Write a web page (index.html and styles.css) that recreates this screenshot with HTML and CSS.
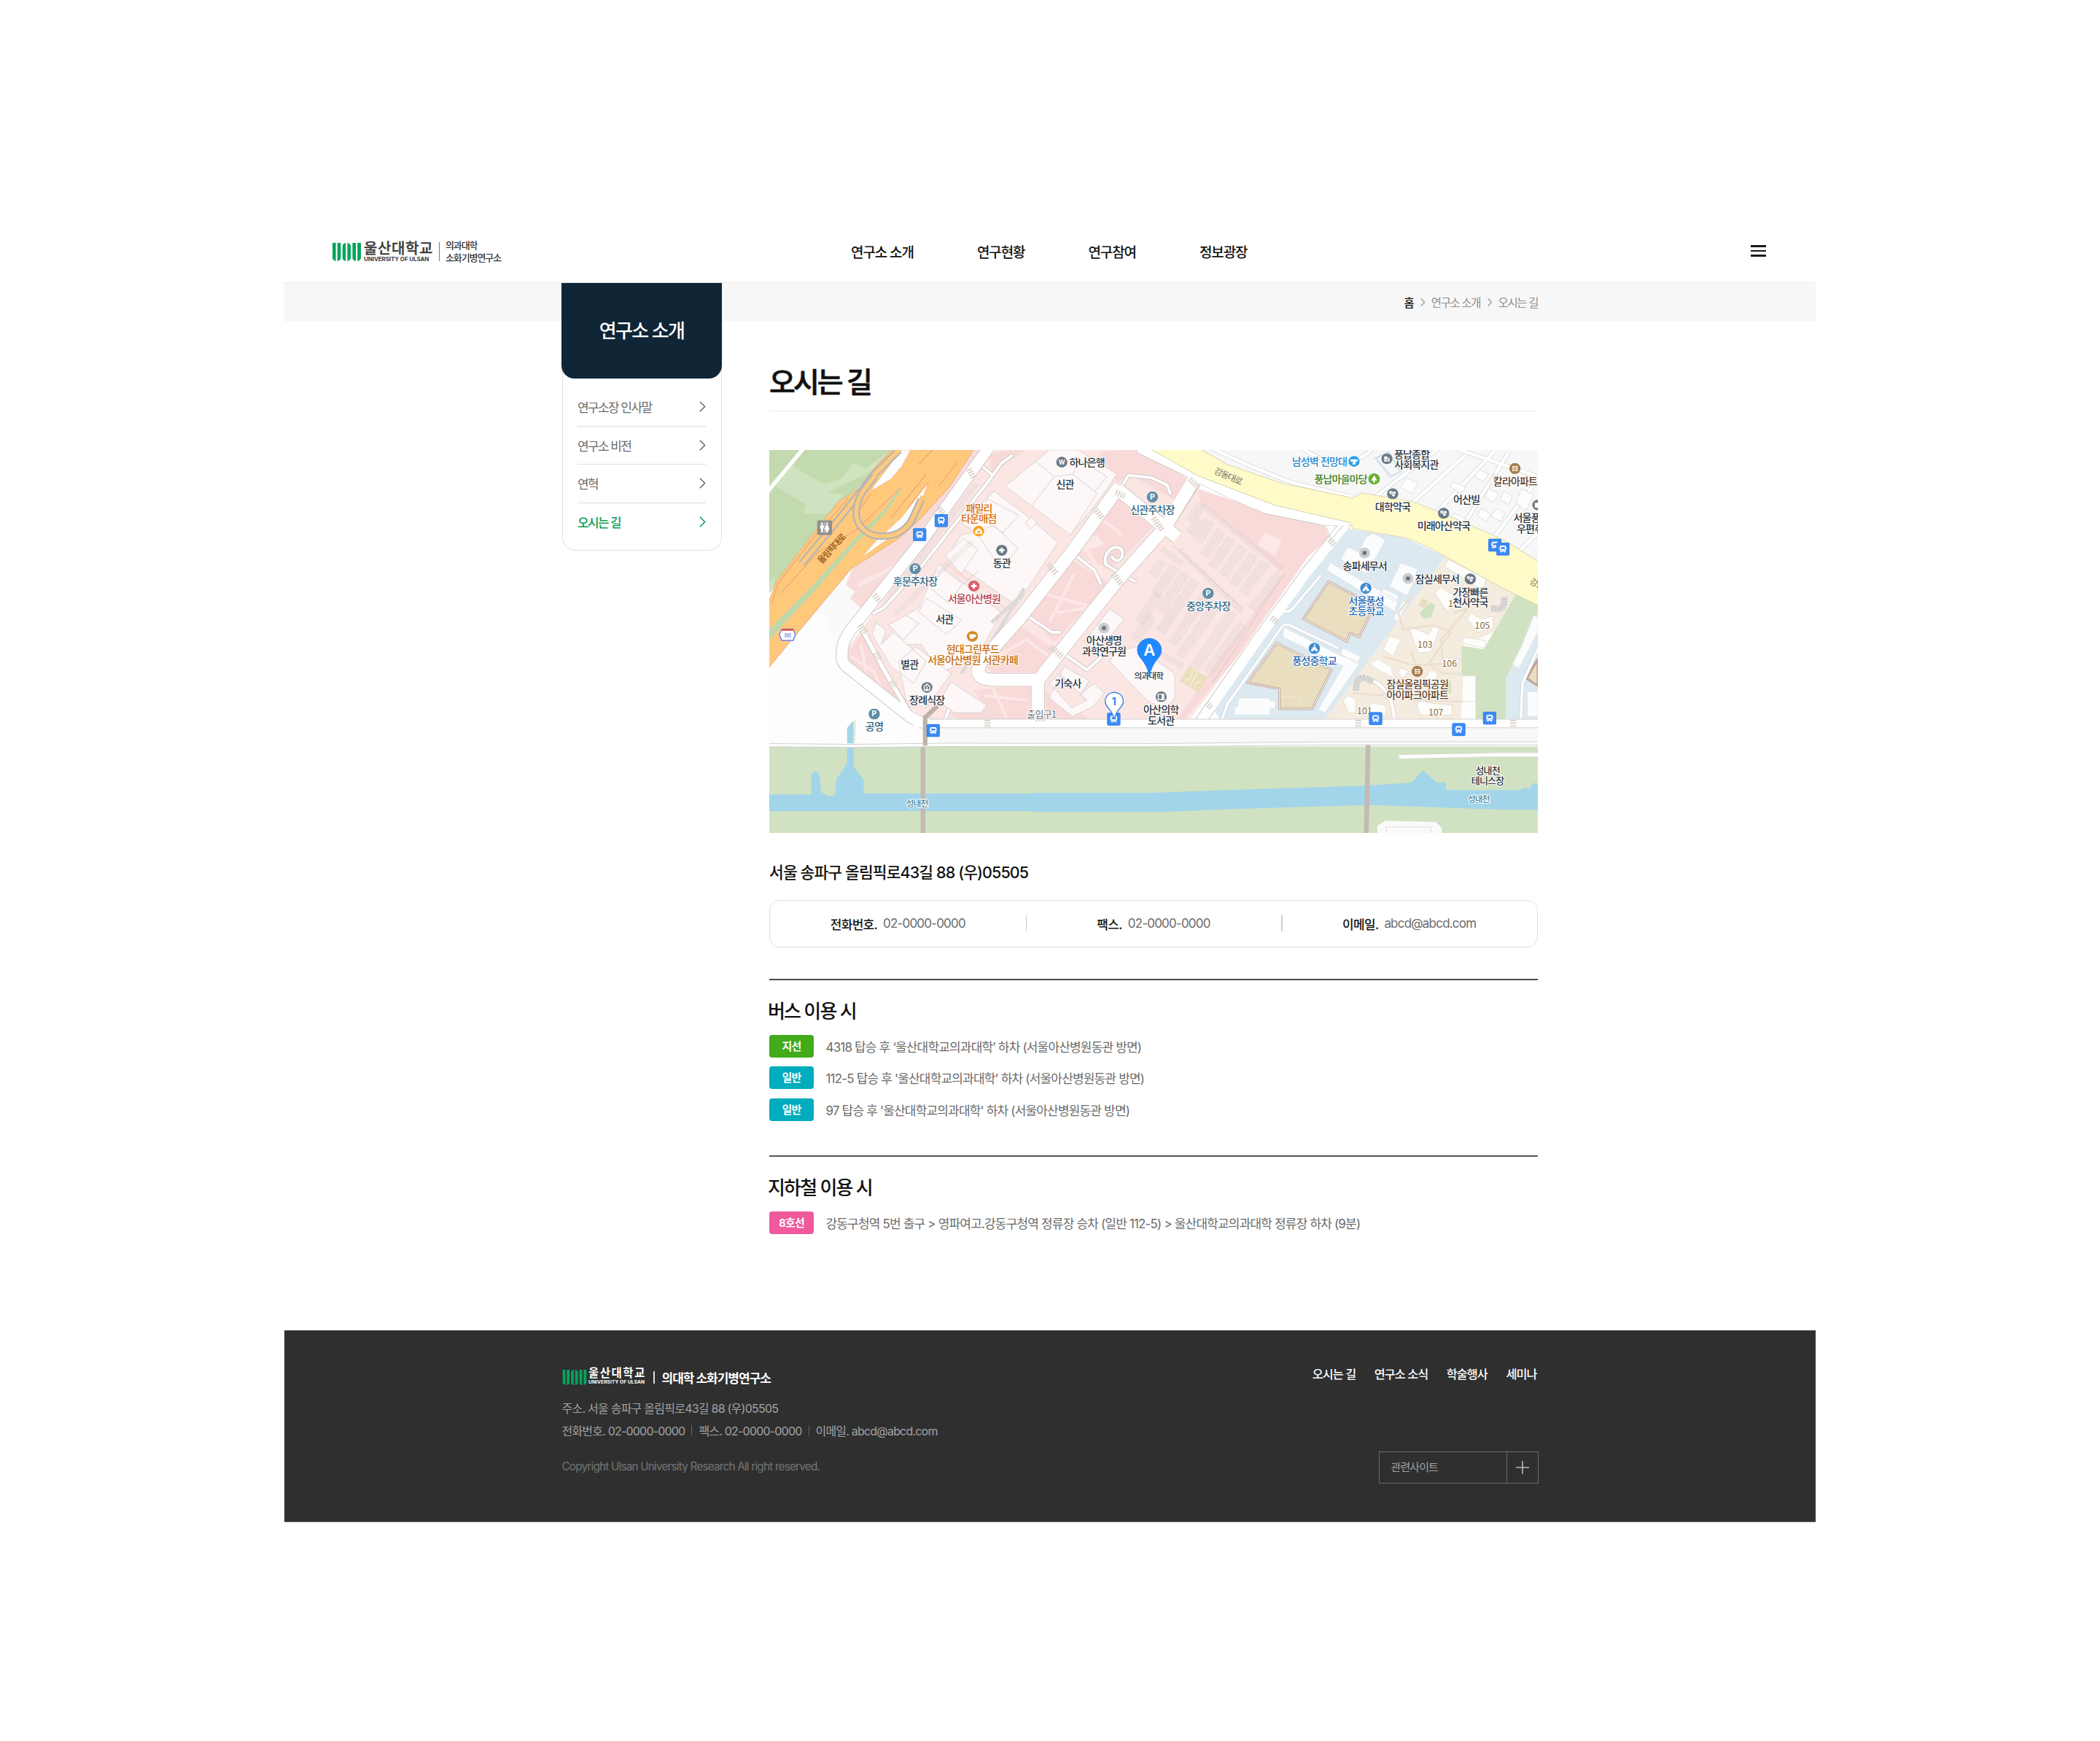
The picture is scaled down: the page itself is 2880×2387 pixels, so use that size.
FILE: index.html
```html
<!DOCTYPE html>
<html lang="ko">
<head>
<meta charset="utf-8">
<title>오시는 길</title>
<link rel="stylesheet" href="styles.css">
</head>
<body>
<svg class="defs" width="0" height="0">
  <defs>
    <symbol id="mark" viewBox="0 0 39 25">
      <path fill="#06a35c" d="M0 0H4.6V25C1.600 24 0 22.500 0 20.500ZM6.700 0H11.400V20.500C11.400 22.800 9.800 24.300 6.700 25ZM18.200 0V25C15 24.300 13.700 22.800 13.700 20.500V4.500C13.700 2.200 15 .7 18.200 0ZM20.400 0C23.600 .7 25 2.200 25 4.500V20.500C25 22.800 23.600 24.300 20.400 25ZM27.400 0H32V25C28.900 24.300 27.400 22.800 27.400 20.500ZM34.200 0H39V20.500C39 22.800 37.500 24.300 34.200 25Z"/>
    </symbol>
    <symbol id="chev" viewBox="0 0 8 14"><path d="M.8 .6L7.200 7L.8 13.400" fill="none" stroke="currentColor" stroke-width="1.500"/></symbol>
  </defs>
</svg>
<div class="page">
  <header class="header">
    <a class="logo">
      <svg class="logo-mark"><use href="#mark"/></svg>
      <span class="logo-name"><b>울산대학교</b><i>UNIVERSITY OF ULSAN</i></span>
      <span class="logo-bar"></span>
      <span class="logo-sub"><span>의과대학</span><span>소화기병연구소</span></span>
    </a>
    <nav class="gnb"><a>연구소 소개</a><a>연구현황</a><a>연구참여</a><a>정보광장</a></nav>
    <button class="burger"><span></span><span></span><span></span></button>
  </header>

  <div class="body">
    <aside class="side">
      <h2>연구소 소개</h2>
      <ul>
        <li><span>연구소장 인사말</span><svg><use href="#chev"/></svg></li>
        <li><span>연구소 비전</span><svg><use href="#chev"/></svg></li>
        <li><span>연혁</span><svg><use href="#chev"/></svg></li>
        <li class="on"><span>오시는 길</span><svg><use href="#chev"/></svg></li>
      </ul>
    </aside>
    <main class="content">
      <div class="crumbs"><b>홈</b><svg><use href="#chev"/></svg><span>연구소 소개</span><svg><use href="#chev"/></svg><span>오시는 길</span></div>
      <h1>오시는 길</h1>

      <svg class="map" viewBox="15 51 3061 1574" preserveAspectRatio="none">
        <defs>
          <symbol id="bus" viewBox="0 0 54 54"><rect x="1" y="1" width="52" height="52" rx="6" fill="#3b8af5" stroke="#2f74d8" stroke-width="2"/><path fill="#fff" d="M15 17Q15 13 19 13H35Q39 13 39 17V37H36V41H31V37H23V41H18V37H15ZM13 20H15V27H13ZM39 20H41V27H39Z"/><path fill="#3b8af5" d="M19 19H35V27H19ZM18 31H22V34H18ZM32 31H36V34H32Z"/></symbol>
          <symbol id="park" viewBox="0 0 46 46"><circle cx="23" cy="23" r="22.500" fill="#5f8ea6"/><text x="23" y="33" class="glyph">P</text></symbol>
          <symbol id="pill" viewBox="0 0 46 46"><circle cx="23" cy="23" r="22.500" fill="#6b7a85"/><circle cx="16" cy="18" r="7" fill="#fff"/><rect x="22" y="13" width="12" height="21" rx="6" fill="#fff" transform="rotate(20 28 23)"/><path d="M12 22L20 14M22 22L35 26" stroke="#6b7a85" stroke-width="2.500"/></symbol>
          <symbol id="plus" viewBox="0 0 46 46"><circle cx="23" cy="23" r="22.500" fill="currentColor"/><path d="M23 12V34M12 23H34" stroke="#fff" stroke-width="8"/></symbol>
          <symbol id="dot" viewBox="0 0 46 46"><circle cx="23" cy="23" r="22" fill="#c9cdd1"/><rect x="15.500" y="15.500" width="15" height="15" fill="#6b7076"/></symbol>
          <symbol id="school" viewBox="0 0 46 46"><circle cx="23" cy="23" r="22.500" fill="#3f8ccf"/><path fill="#fff" d="M22 8H29V12H24V15L31 21V25L36 28V35H26V29H20V35H10V28L15 25V21L22 15Z"/></symbol>
          <symbol id="apt" viewBox="0 0 46 46"><circle cx="23" cy="23" r="22.500" fill="#a47c45"/><path fill="#fff" d="M12 13H34V33H12Z"/><path d="M23 13V33M12 20H34M12 27H34" stroke="#a47c45" stroke-width="2.500"/></symbol>
        </defs>

        <rect x="15" y="51" width="3061" height="1574" fill="#fdfdfd"/>

        <!-- park beside the expressway -->
        <path fill="#c2daae" d="M15 51H540L330 240L180 440L15 640Z"/>
        <path fill="#d0e2c0" d="M40 200L105 115L230 190L300 170L350 105L400 125L490 55L500 90L400 150L250 225L310 235L250 310L150 315L160 275ZM15 600L40 560L30 620L15 640Z"/>
        <path d="M8 222L155 40" stroke="#fff" stroke-width="16"/>
        <path fill="#fafafa" d="M340 540L400 700L300 870L290 930L230 700L97 840Z"/>

        <!-- hospital strip along the expressway -->
        <path fill="#f8dcda" d="M830 51H865L620 400L388 708L336 660L356 635L320 605L345 540L500 430L640 290Z"/>
        <path d="M370 605L540 520L600 440" fill="none" stroke="#fbe7e5" stroke-width="18"/>

        <!-- expressway -->
        <path fill="#ffc97c" stroke="#f0b080" stroke-width="3" d="M500 51H828L735 200L620 330L530 415L340 540L97 840L10 950V680L45 590L190 395L290 265L330 240L380 200L430 130Z"/>
        <path fill="#fcfcfc" stroke="#f0b080" stroke-width="2" d="M532 51H578L545 115L500 170L440 208L420 215L490 120ZM650 180L615 280L570 350L490 415L380 495L440 425L540 330Z"/>
        <path fill="#bfd8aa" d="M15 788L190 605L360 412L470 300L535 205L540 215L470 320L365 430L200 625L15 832Z"/>
        <path d="M25 680L50 600L200 400L330 250M60 640L210 470L360 380L540 205M380 290L420 230M610 110L665 51M560 300L650 180M690 200L765 100M500 330L640 150" fill="none" stroke="#efa77c" stroke-width="4"/>
        <path d="M145 518L300 325L430 155L532 51" fill="none" stroke="#b5b5b5" stroke-width="30"/>
        <path d="M140 524L300 325L430 155L538 45" fill="none" stroke="#ffc97c" stroke-width="17"/>
        <path d="M435 158L385 225Q350 290 367 345Q400 410 470 405Q540 405 580 345L620 255" fill="none" stroke="#b5b5b5" stroke-width="30"/>
        <path d="M439 152L385 225Q350 290 367 345Q400 410 470 405Q540 405 580 345L626 240" fill="none" stroke="#ffc97c" stroke-width="16"/>

        <!-- hospital grounds -->
        <path fill="#fbe6e4" d="M890 51H1480L1620 150L1750 230L2000 315L2225 362L2245 410L2160 490L1879 900L1690 1157H640L325 930V870L430 720L700 340Z"/>
        <path fill="#f8dad8" d="M1400 51H1480L1620 130L1710 185L1660 270L1600 240L1450 150L1400 190L1330 60ZM1724 210L1780 230L2020 312L2229 365L2244 410L2160 490L1879 900L1669 1157H1640L1800 920L2065 555L1935 440L1730 268ZM890 70L970 51H1040L900 150ZM1410 250L1540 370L1375 545L1230 475ZM1200 490L1370 600L1150 840L1045 730ZM1005 770L1150 870L1080 965H900L870 920ZM330 880L380 810L560 1110L480 1060L320 930ZM830 1040L1060 1010L1050 1157H760L730 1130L880 1110ZM1115 1040L1290 1157H1120ZM700 500L860 620L760 560Z"/>
        <path d="M1240 400L1340 560M1300 300L1420 400M1100 640L1280 690M1130 760L1230 560M1160 720L1280 700M920 900L1040 830L1130 900M340 900L430 960L470 1050M870 1060L1040 1080M900 1020L960 1150M380 850L400 960" fill="none" stroke="#fce8e6" stroke-width="12"/>
        <path fill="#fce9e7" d="M1250 420L1320 400L1350 440L1260 470ZM1990 392L2055 420L2030 485L1960 440Z"/>

        <!-- hospital buildings -->
        <g fill="#fdf8f7" stroke="#dcd8d8" stroke-width="3">
          <path d="M1130 51H1245L1400 150L1340 240L1215 400L955 200Z"/>
          <path d="M1078 100L1150 160L1060 280M1225 150L1320 230L1215 400M1150 160L1225 150L1250 90L1360 160L1310 225" fill="none"/>
          <path d="M910 220L1040 320L1165 430L1000 690L720 490L780 400L835 390L780 350Z"/>
          <path d="M880 250L1010 320L945 390L870 340ZM910 360L1005 455L940 545L840 390ZM790 415L845 460L780 560L715 485ZM850 545L790 600M885 630L950 700"/>
          <path d="M690 520L940 720L860 870L700 970L620 850L460 850L560 730L610 700Z"/>
          <path d="M705 540L785 600L730 680L660 620ZM640 660L780 750L720 810L610 715ZM560 730L610 765L550 830L490 770Z"/>
          <path d="M440 760L480 790L460 850L510 800L640 920L590 1010L500 940L425 810ZM530 920L600 860L740 970L640 1110L560 1080Z"/>
          <path d="M740 1005L880 1100L860 1130H750L690 1085ZM1190 940L1290 1000L1250 1060L1310 1010L1350 1050L1300 1110L1220 1145L1130 1070ZM1130 1010L1220 1110L1280 1080L1170 970Z"/>
          <path d="M1370 705L1430 745L1330 870L1270 840ZM1400 880L1480 860L1630 970L1630 1070L1590 1120L1520 1080L1370 920ZM1060 325L1080 350L1055 375L1035 350Z"/>
        </g>
        <path d="M1030 620L870 890M900 760L1030 640M780 970L850 860" fill="none" stroke="#ded9d9" stroke-width="14"/>

        <!-- parking bays -->
        <g fill="none" stroke="#d2c9c8">
          <path stroke-width="42" stroke-dasharray="2 7" d="M1735 275L1690 345M1732 340L1690 395M1770 345L1720 430M1815 385L1745 490M1855 415L1780 530M1900 450L1820 570M1945 485L1860 610M1990 515L1900 640M2050 560L1940 705"/>
          <path stroke-width="42" stroke-dasharray="2 7" d="M1580 510L1540 570M1630 530L1550 650M1670 560L1570 720M1710 590L1570 800M1755 640L1620 850M1800 680L1650 900M1860 720L1700 960M1900 770L1760 970M1565 645L1490 760M1540 735L1470 830"/>
          <path stroke-width="24" stroke-dasharray="2 7" d="M1735 275L2060 545M1580 460L1660 520M1650 460L1900 720M1500 850L1580 890L1660 940M840 190L480 680M820 430L510 730"/>
        </g>
        <path d="M1620 440L1900 700M2065 560L1780 1010" fill="none" stroke="#dccfce" stroke-width="3"/>

        <!-- small ground roads -->
        <g fill="none" stroke-linecap="round" stroke-linejoin="round">
          <path stroke="#cfcaca" stroke-width="17" d="M980 75L940 105L880 190L620 530L470 700L430 722M860 115L900 150M1420 200L1445 155L1539 165L1600 195L1612 230M1230 480L1310 545L1335 600M1040 730L1140 800L1175 800M1470 590L1400 550L1355 520Q1345 470 1390 450Q1430 450 1420 490Q1400 520 1380 490M1190 890L1280 955L1340 900M730 1120L715 1160"/>
          <path stroke="#fff" stroke-width="11" d="M980 75L940 105L880 190L620 530L470 700L430 722M860 115L900 150M1420 200L1445 155L1539 165L1600 195L1612 230M1230 480L1310 545L1335 600M1040 730L1140 800L1175 800M1470 590L1400 550L1355 520Q1345 470 1390 450Q1430 450 1420 490Q1400 520 1380 490M1190 890L1280 955L1340 900M730 1120L715 1160"/>
        </g>

        <!-- main streets -->
        <g fill="none" stroke-linejoin="round">
          <path stroke="#cdc9c8" stroke-width="50" d="M890 40L640 400L340 790Q305 840 305 880V910Q310 935 340 955L560 1135Q600 1172 660 1176"/>
          <path stroke="#cdc9c8" stroke-width="22" d="M385 790L480 970L580 1140"/>
          <path stroke="#d8cccb" stroke-width="56" d="M1410 200L1220 470L1015 740L860 920Q835 960 860 985Q880 996 920 996H1090M1709 180L1590 370L1400 590L1190 860L1085 1000V1170M1400 210L1640 410"/>
          <path stroke="#cdc9c8" stroke-width="50" d="M1490 40L1700 145Q1850 230 2000 290L2230 338H2340"/>
          <path stroke="#cdc9c8" stroke-width="46" d="M2310 355L2150 560L1960 830L1730 1170"/>
          <path stroke="#fff" stroke-width="44" d="M890 40L640 400L340 790Q305 840 305 880V910Q310 935 340 955L560 1135Q600 1172 660 1176"/>
          <path stroke="#fff" stroke-width="16" d="M375 770L480 970L590 1160"/>
          <path stroke="#fff" stroke-width="50" d="M1410 200L1220 470L1015 740L860 920Q835 960 860 985Q880 996 920 996H1090M1709 170L1590 370L1400 590L1190 860L1085 1000V1170M1400 210L1640 410"/>
          <path stroke="#fff" stroke-width="45" d="M1490 40L1700 145Q1850 230 2000 290L2230 338H2340"/>
        </g>

        <!-- north-east blocks -->
        <path fill="#f7f7f7" d="M1730 51H3076V560L2940 490L2700 330L2570 262L2374 228L2340 248L2060 185L1840 110Z"/>
        <g fill="none" stroke="#dadada" stroke-width="18"><path d="M1780 45Q1950 130 2100 185L2340 245M2420 250L2680 45M2580 265L2790 70M2680 300L2900 60M2780 360L2960 60M2880 440L3076 170M2750 45L3076 160M2980 490L3076 390M2140 45Q2300 160 2420 45"/></g>
        <g fill="none" stroke="#fff" stroke-width="13"><path d="M1780 45Q1950 130 2100 185L2340 245M2420 250L2680 45M2580 265L2790 70M2680 300L2900 60M2780 360L2960 60M2880 440L3076 170M2750 45L3076 160M2980 490L3076 390M2140 45Q2300 160 2420 45"/></g>
        <g fill="#fdfdfd" stroke="#e2e2e2" stroke-width="3"><path d="M2550 165L2600 185L2575 230L2530 205ZM2740 180L2790 205L2770 230L2725 200ZM2840 130L2880 150L2860 180L2825 160ZM2900 150L2940 170L2920 205L2885 185ZM2880 210L2920 230L2900 265L2865 245ZM2850 290L2890 315L2870 345L2835 320ZM2910 290L2945 310L2930 345L2890 325ZM2940 220L2975 240L2960 275L2925 255ZM3010 210L3060 235L3030 300L2990 270ZM2740 310L2790 335L2775 360L2730 335Z"/></g>
        <path d="M2430 85L2480 60L2530 140L2490 160Z" fill="none" stroke="#d5e4ee" stroke-width="9"/>

        <!-- school block, apartments, green belt -->
        <path fill="#dce9f1" d="M2310 372L2350 380L2540 410L2710 490L2445 860L2230 1157H1810L1780 1110L2020 760L2240 450Z"/>
        <path fill="#f5ece0" d="M2706 488L2990 640L2900 800L2774 855L2772 1157H2228L2445 860Z"/>
        <path fill="#d0e2c2" d="M2990 640L3076 690V740L3000 880L2950 990V1157H2828V980H2772V855L2860 870Z"/>
        <path fill="#dce9f1" d="M3076 720L3000 880L2950 990V1157H3076Z"/>
        <g fill="#fbfcfd" stroke="#e3e6e8" stroke-width="3"><path d="M2390 410L2420 393L2470 420L2395 560L2290 500L2320 450L2365 470ZM2250 515L2520 670L2505 715L2235 545ZM2530 515L2595 540L2590 580L2555 650L2485 610ZM2460 620L2522 650L2515 675L2450 645ZM2540 670L2558 680L2520 755L2500 742ZM2065 780L2300 900L2370 925L2365 930L2230 1130L2200 1120L2300 940L2060 820ZM2300 865L2370 900L2360 930L2290 890ZM1885 1070H2010V1080L2030 1085V1110L2010 1115V1140H1868V1110L1880 1105ZM3060 730L3076 740V800L3000 950L2975 930L3010 860ZM3035 1045H3076V1145H3035Z"/></g>
        <g fill="#fdfdfc" stroke="#e8e0d6" stroke-width="3"><path d="M2720 500L2870 580L2860 630L2705 530ZM2690 615L2740 650L2720 720L2665 640ZM2810 720L2850 745L2895 735L2900 780L2840 800L2795 745ZM2560 775L2600 790L2640 810L2660 775L2685 785L2650 880L2600 885ZM2780 820L2870 835L2865 865L2775 845ZM2485 815L2530 830L2500 900L2460 870ZM2440 910L2490 940L2505 990L2450 960L2405 930ZM2530 945L2560 960L2540 990L2520 970ZM2650 955L2680 970L2650 1020L2625 990ZM2690 905L2760 910V940H2690ZM2320 1060L2350 1075V1130L2325 1135L2300 1080ZM2410 1090L2470 1100V1140H2400ZM2600 1070L2640 1090L2735 1100V1140H2610L2595 1110ZM2775 980H2828V1085H2773Z"/></g>
        <g fill="none" stroke="#ebdfd0" stroke-width="8"><path d="M2460 900L2580 935L2700 930L2690 830L2800 700L2740 720M2580 640L2520 720L2540 790L2660 770L2730 800L2640 930L2700 970H2770M2560 1080L2780 1085M2340 1050L2450 1060L2500 1030M2570 880L2590 930"/></g>
        <path fill="#cfe3c0" d="M2650 675L2668 690L2650 740L2620 745L2605 720ZM2700 1000H2730V1050H2690Z"/>
        <path fill="#e8ddbb" d="M2615 660L2640 670L2625 700L2600 690Z"/>
        <path d="M2420 1000Q2500 1040 2504 1157" fill="none" stroke="#e0d8cd" stroke-width="18"/>
        <path d="M2420 1000Q2500 1040 2504 1160M2804 1095V1160" fill="none" stroke="#fff" stroke-width="12"/>
        <path d="M2352 1040Q2350 980 2390 988L2420 1005M2890 700Q2950 720 2940 655" fill="none" stroke="#d0d0d0" stroke-width="26" stroke-dasharray="9 2"/>

        <g fill="#e9dec0" stroke="#bfa295" stroke-width="9">
          <path d="M2242 592L2425 690L2365 820L2328 803L2316 838L2142 745Z"/>
          <path d="M2036 844L2254 955L2177 1115H2047V1033L1920 1007Z"/>
          <path d="M3076 910L3032 990L3076 1020Z"/>
        </g>
        <g fill="none" stroke="#fff" stroke-width="3">
          <path d="M2242 592L2425 690L2365 820L2328 803L2316 838L2142 745Z"/>
          <path d="M2036 844L2254 955L2177 1115H2047V1033L1920 1007Z"/>
        </g>
        <path d="M2055 1065H2130V1105" fill="none" stroke="#f3ead2" stroke-width="3"/>
        <path fill="#eadfbd" d="M1685 940L1760 985L1725 1050L1650 1000Z"/>
        <path d="M1700 955Q1700 1000 1670 995M1740 1005Q1705 1000 1712 1035M1720 965L1690 1025" fill="none" stroke="#f8f0d8" stroke-width="4"/>
        <g fill="none" stroke-linecap="round" stroke-linejoin="round">
          <path stroke="#ccd3d8" stroke-width="14" d="M2050 712Q2090 725 2110 690L2210 568M2280 865L2085 770Q2065 765 2055 780L1840 1095L1818 1157M3076 870L3015 1010L3008 1157"/>
          <path stroke="#fff" stroke-width="10" d="M2050 712Q2090 725 2110 690L2210 568M2280 865L2085 770Q2065 765 2055 780L1840 1095L1818 1157M3076 870L3015 1010L3008 1160"/>
        </g>
        <path d="M2310 355L2150 560L1960 830L1730 1170" fill="none" stroke="#fff" stroke-width="40"/>
        <path d="M2232 365L2252 420L2300 362" fill="none" stroke="#cfcfcf" stroke-width="3"/>

        <!-- yellow arterial -->
        <path fill="#fffbc8" stroke="#d9d5b8" stroke-width="3" d="M1530 46H1729L1839 110L2060 188L2339 248L2374 228L2574 262L2719 320L2939 420L3080 510V692L2939 620L2709 490Q2610 430 2539 410L2339 374L2329 350L2029 278L1719 155L1600 85Z"/>

        <!-- riverside road -->
        <rect x="690" y="1193" width="2386" height="65" fill="#f8f8f8"/>
        <path d="M650 1175H3076" stroke="#cfcfcf" stroke-width="38"/>
        <path d="M590 1175H3076" stroke="#fff" stroke-width="32"/>
        <rect x="15" y="1270" width="3061" height="355" fill="#d0e2c2"/>
        <path d="M15 1264L350 1267L700 1263L1539 1264L2250 1257H3076" fill="none" stroke="#cfcfcf" stroke-width="16"/>
        <path d="M15 1264L350 1267L700 1263L1539 1264L2250 1257H3076" fill="none" stroke="#fff" stroke-width="10"/>
        <path fill="#a2d5ea" d="M15 1467H182V1390Q198 1350 215 1390L222 1458L250 1473L278 1470L282 1405L318 1350L325 1335V1275H351V1352L391 1408V1463H1060V1460H1539L1875 1447L2390 1431L2573 1418L2619 1367L2675 1420L2710 1416V1449H3005L3020 1440L3045 1443L3055 1421H3076V1529H2920L2690 1520L2410 1510L1880 1526L1600 1538H1063V1535H15Z"/>
        <path fill="#a2d5ea" d="M325 1257V1193L350 1163L354 1257Z"/><path d="M357 1163L353 1257" stroke="#e3edd8" stroke-width="8"/>
        <path d="M627 1272V1625M2400 1262L2393 1625" stroke="#c4bab4" stroke-width="19"/>
        <path d="M685 1103L636 1150V1266" fill="none" stroke="#bdb2aa" stroke-width="18"/>
        <path d="M2522 1312L2900 1304H3076" fill="none" stroke="#d8ddd2" stroke-width="19"/><path d="M2524 1312L2900 1304H3076" fill="none" stroke="#fff" stroke-width="14"/>
        <path fill="#fafafa" d="M2437 1625V1595L2470 1575L2670 1580L2693 1605V1625Z"/>
        <path d="M2475 1622L2470 1600H2650V1625" fill="none" stroke="#ddd" stroke-width="3"/>

        <!-- crossings -->
        <g fill="none" stroke="#ddd4cb" stroke-width="24" stroke-dasharray="6 5">
          <path d="M884 1160V1195M2361 1160V1195M2978 1160V1195M690 290L710 315M810 130L830 165M435 645L455 675M375 770L400 800M1395 225L1430 240M1310 290L1345 335M1125 520L1160 560M1385 560L1420 605M1690 170L1725 205M2245 420L2265 440M1135 860L1180 900M2015 740L2040 760M1545 330L1580 380M1755 1090L1775 1110M1075 1155H1115M440 885L455 910M500 1000L520 1020"/>
        </g>

        <g class="icons">
          <use href="#bus" x="673" y="314" width="54" height="54"/><use href="#bus" x="587" y="372" width="54" height="54"/>
          <use href="#bus" x="641" y="1177" width="54" height="54"/><use href="#bus" x="1360" y="1130" width="54" height="54"/>
          <use href="#bus" x="2878" y="415" width="54" height="54"/><use href="#bus" x="2910" y="431" width="54" height="54"/>
          <use href="#bus" x="2734" y="1173" width="54" height="54"/><use href="#bus" x="2857" y="1126" width="54" height="54"/>
          <use href="#park" x="573" y="516" width="46" height="46"/><use href="#park" x="410" y="1113" width="46" height="46"/><use href="#park" x="1518" y="221" width="46" height="46"/><use href="#park" x="1740" y="617" width="46" height="46"/>
          <use href="#plus" x="918" y="440" width="46" height="46" color="#6b7a85"/><use href="#plus" x="807" y="587" width="46" height="46" color="#d95f6b"/>
          <use href="#dot" x="1325" y="760" width="46" height="46"/><use href="#dot" x="2363" y="451" width="46" height="46"/><use href="#dot" x="2536" y="556" width="46" height="46"/>
          <use href="#pill" x="2475" y="208" width="46" height="46"/><use href="#pill" x="2678" y="288" width="46" height="46"/><use href="#pill" x="2784" y="558" width="46" height="46"/>
          <use href="#school" x="2368" y="596" width="46" height="46"/><use href="#school" x="2163" y="843" width="46" height="46"/>
          <use href="#apt" x="2962" y="104" width="46" height="46"/><use href="#apt" x="2573" y="938" width="46" height="46"/>
          <circle cx="1180" cy="101" r="22" fill="#6b7a85"/><text x="1180" y="110" class="glyph w">W</text>
          <circle cx="849" cy="384" r="22" fill="#f9a11b"/><path d="M835 384L849 371L863 384V396H835Z" fill="#fff"/><path d="M843 384V391H855V384Z" fill="#f9a11b"/>
          <circle cx="824" cy="817" r="22" fill="#d28a28"/><path d="M812 808H832V810Q840 809 839 816Q838 821 831 821Q828 828 822 828Q812 828 812 816Z" fill="#fff"/>
          <circle cx="643" cy="1027" r="22" fill="#6b7a85"/><path d="M632 1039V1022L643 1013L654 1022V1039Z" fill="none" stroke="#fff" stroke-width="4"/><path d="M643 1022V1036M637 1036H649" stroke="#fff" stroke-width="4"/>
          <circle cx="1576" cy="1065" r="22" fill="#6b7a85"/><path d="M1564 1055H1580V1077H1564ZM1582 1055H1587V1077H1582Z" fill="none" stroke="#fff" stroke-width="4"/>
          <circle cx="2344" cy="98" r="22" fill="#2ba0e8"/><path d="M2330 89H2358V99H2348L2352 110H2336L2341 99H2330Z" fill="#fff"/>
          <circle cx="2424" cy="170" r="23" fill="#6cb033"/><path d="M2424 155L2436 176H2427V185H2421V176H2412Z" fill="#fff"/>
          <circle cx="2475" cy="87" r="22" fill="#6b7a85"/><path d="M2464 77H2477V83H2486V98H2464Z" fill="#fff"/><path d="M2477 83V98M2464 90H2486" stroke="#6b7a85" stroke-width="2"/>
          <circle cx="3076" cy="277" r="22" fill="#6b7a85"/><path d="M3064 268H3080V288H3064Z" fill="#fff"/>
          <rect x="206" y="340" width="59" height="60" rx="5" fill="#8f8f8f"/><path fill="#fff" d="M221 349h8v8h-8ZM218 359h14v15h-3v16h-8v-16h-3ZM241 349h8v8h-8ZM241 359h8l6 20h-5v11h-10v-11h-5Z"/><path d="M235 347V392" stroke="#fff" stroke-width="2"/>
          <path d="M65 787H110L119 810L110 834H65L55 810Z" fill="#fff" stroke="#7f8fe0" stroke-width="5"/><path d="M65 790H110" stroke="#d9534f" stroke-width="8"/>
          <text x="88" y="821" class="shield">88</text>
        </g>

        <g class="labels" transform="translate(0 16)">
          <text x="1280" y="101">하나은행</text><text x="1193" y="191">신관</text>
          <text x="941" y="516">동관</text><text x="713" y="746">서관</text><text x="573" y="932">별관</text>
          <text x="1348" y="834">아산생명</text><text x="1348" y="878">과학연구원</text>
          <text x="643" y="1079">장례식장</text><text x="1204" y="1010">기숙사</text>
          <text x="1526" y="977" class="sm">의과대학</text><text x="1099" y="1136" class="gray">출입구1</text>
          <text x="1575" y="1117">아산의학</text><text x="1575" y="1161">도서관</text>
          <text x="2574" y="67">풍납종합</text><text x="2592" y="110">사회복지관</text>
          <text x="2498" y="285">대학약국</text><text x="2701" y="363">미래아산약국</text><text x="2792" y="255">어산빌</text>
          <text x="3049" y="330">서울풍성</text><text x="3062" y="375">우편취급</text>
          <text x="2387" y="528">송파세무서</text><text x="2675" y="580">잠실세무서</text>
          <text x="2729" y="680" class="num">1</text>
          <text x="2807" y="634">가장빠른</text><text x="2807" y="678">천사약국</text>
          <text x="2876" y="1367" class="md">성내천</text><text x="2876" y="1409" class="md">테니스장</text>
          <g fill="#d76a05"><text x="850" y="289">패밀리</text><text x="849" y="332">타운매점</text></g>
          <g fill="#c56a08"><text x="825" y="868">현대그린푸드</text><text x="825" y="912">서울아산병원 서관카페</text></g>
          <g fill="#2f6480"><text x="596" y="591">후문주차장</text><text x="433" y="1187">공영</text><text x="1541" y="296">신관주차장</text><text x="1764" y="692">중앙주차장</text></g>
          <text x="831" y="662" fill="#b53d4c">서울아산병원</text>
          <g fill="#1f68b5"><text x="2392" y="671">서울풍성</text><text x="2392" y="714">초등학교</text><text x="2186" y="917">풍성중학교</text></g>
          <text x="2206" y="97" fill="#2488cc">남성벽 전망대</text><text x="2291" y="170" fill="#3d7d1c">풍납마을마당</text>
          <g fill="#5c3d24"><text x="2986" y="180">칼라아파트</text><text x="2596" y="1013">잠실올림픽공원</text><text x="2596" y="1056">아이파크아파트</text></g>
          <text x="2855" y="771" class="num">105</text><text x="2627" y="848" class="num">103</text><text x="2724" y="925" class="num">106</text><text x="2386" y="1120" class="num">101</text><text x="2670" y="1126" class="num">107</text>
          <g fill="#3f8099" class="sm"><text x="603" y="1502">성내천</text><text x="2840" y="1483">성내천</text></g>
        </g>
        <text class="road hw" transform="translate(272 466) rotate(-48)">올림픽대로</text>
        <text class="road" transform="translate(1837 170) rotate(24)">강동대로</text>
        <text class="road" transform="translate(3092 626) rotate(28)">강동대로</text>
        <use href="#bus" x="2403" y="1128" width="54" height="54"/>

        <path fill="#fff" stroke="#3b82e8" stroke-width="4" d="M1389 1158Q1384 1130 1362 1107A36 36 0 1 1 1416 1107Q1394 1130 1389 1158Z"/>
        <text x="1388" y="1099" class="pin one">1</text>
        <path fill="#2189ff" stroke="#1a72e0" stroke-width="2" d="M1529 980Q1522 940 1494 906A48 48 0 1 1 1564 906Q1536 940 1529 980Z"/>
        <text x="1529" y="897" class="pin">A</text>
      </svg>

      <h3 class="addr">서울 송파구 올림픽로43길 88 (우)05505</h3>
      <dl class="contact">
        <div><dt>전화번호.</dt><dd>02-0000-0000</dd></div>
        <div><dt>팩스.</dt><dd>02-0000-0000</dd></div>
        <div><dt>이메일.</dt><dd>abcd@abcd.com</dd></div>
      </dl>

      <section class="route">
        <h2>버스 이용 시</h2>
        <p><b class="tag green">지선</b><span>4318 탑승 후 ‘울산대학교의과대학’ 하차 (서울아산병원동관 방면)</span></p>
        <p><b class="tag teal">일반</b><span>112-5 탑승 후 '울산대학교의과대학' 하차 (서울아산병원동관 방면)</span></p>
        <p><b class="tag teal">일반</b><span>97 탑승 후 '울산대학교의과대학' 하차 (서울아산병원동관 방면)</span></p>
      </section>
      <section class="route second">
        <h2>지하철 이용 시</h2>
        <p><b class="tag pink">8호선</b><span>강동구청역 5번 출구 &gt; 영파여고.강동구청역 정류장 승차 (일반 112-5) &gt; 울산대학교의과대학 정류장 하차 (9분)</span></p>
      </section>
    </main>
  </div>

  <footer class="footer">
    <div class="f-left">
      <div class="f-logo">
        <svg class="f-mark"><use href="#mark"/></svg>
        <span class="f-name"><b>울산대학교</b><i>UNIVERSITY OF ULSAN</i></span>
        <span class="f-bar"></span>
        <strong>의대학 소화기병연구소</strong>
      </div>
      <p class="f-addr">주소. 서울 송파구 올림픽로43길 88 (우)05505</p>
      <p class="f-tel"><span>전화번호. 02-0000-0000</span><i></i><span>팩스. 02-0000-0000</span><i></i><span>이메일. abcd@abcd.com</span></p>
      <p class="f-copy">Copyright Ulsan University Research All right reserved.</p>
    </div>
    <div class="f-right">
      <nav><a>오시는 길</a><a>연구소 소식</a><a>학술행사</a><a>세미나</a></nav>
      <div class="family"><span>관련사이트</span><button><svg viewBox="0 0 18 18"><path d="M9 0V18M0 9H18" stroke="#bbb" stroke-width="1.600"/></svg></button></div>
    </div>
  </footer>
</div>
</body>
</html>
```
FILE: styles.css
```css
* { box-sizing: border-box; margin: 0; padding: 0; }
body { background: #fff; font-family: Inter, "Noto Sans CJK KR", sans-serif; color: #111; }
ul { list-style: none; }
i { font-style: normal; }
button { background: none; border: 0; }
.defs { position: absolute; }
.page { width: 2100px; margin: 0 auto; padding-top: 301px; white-space: nowrap; }

.header { display: flex; align-items: center; height: 87px; border-bottom: 1.500px solid #e8e8e8; padding: 0 68.500px 0 65.500px; }
.logo { display: flex; align-items: center; width: 711.500px; padding-top: 2px; }
.logo-mark { width: 39px; height: 25px; }
.logo-name { display: flex; flex-direction: column; width: 94px; margin-left: 4.500px; color: #3a3a3a; }
.logo-name b { font-size: 20px; line-height: 19px; letter-spacing: .6px; font-weight: 500; -webkit-text-stroke: .3px; }
.logo-name i { font-size: 8px; line-height: 8px; font-weight: 700; letter-spacing: -.1px; }
.logo-bar { width: 1.500px; height: 26px; background: #777; margin: 0 8px 0 8.500px; }
.logo-sub { display: flex; flex-direction: column; font-size: 13px; line-height: 17.500px; font-weight: 500; color: #333; letter-spacing: -1.100px; }
.gnb { display: flex; gap: 87px; font-size: 19px; font-weight: 500; letter-spacing: -1.100px; flex: 1; }
.burger { display: flex; flex-direction: column; gap: 4.200px; width: 21px; }
.burger span { height: 2.300px; background: #1a1a1a; }

.body { display: flex; gap: 65.500px; padding-left: 380.500px; height: 1436px; background: linear-gradient(#f7f7f7, #f7f7f7) no-repeat 0 0 / 100% 52.500px; }
.side { width: 219px; height: 367px; background: #fff; border: 1.500px solid #e2e2e2; border-top: 0; border-radius: 0 0 18px 18px; }
.side h2 { height: 131px; margin: 0 -1.500px; background: #102535; color: #fff; border-radius: 0 0 18px 18px; font-size: 26px; font-weight: 500; line-height: 131px; text-align: center; letter-spacing: -1.700px; }
.side ul { padding: 13px 21px 0 20.500px; }
.side li { display: flex; justify-content: space-between; align-items: center; height: 52.500px; border-bottom: 1.500px solid #ddd; font-size: 17px; color: #6b6b6b; letter-spacing: -1.600px; }
.side li:last-child { border: 0; }
.side li svg { width: 8.500px; height: 15px; }
.side .on { color: #0a9b58; font-weight: 500; }

.content { width: 1054px; }
.crumbs { display: flex; align-items: center; justify-content: flex-end; height: 52.500px; font-size: 15.500px; letter-spacing: -1.400px; color: #8f8f8f; }
.crumbs b { color: #111; font-weight: 500; }
.crumbs svg { width: 6.500px; height: 11px; margin: 0 8.500px 0 9.500px; }
.content h1 { height: 123.500px; padding-top: 53px; line-height: 60px; font-size: 39px; font-weight: 500; letter-spacing: -3px; border-bottom: 1.500px solid #e9e9e9; -webkit-text-stroke: .7px; }
.map { display: block; width: 1054px; height: 525px; margin-top: 53px; overflow: hidden; }
.map .glyph { font: 700 30px Inter; fill: #fff; text-anchor: middle; }
.map .w { font-size: 25px; }
.map .shield { font: 26px "Liberation Serif"; fill: #5060d0; text-anchor: middle; }
.labels text { font: 500 41px "Noto Sans CJK KR"; letter-spacing: -2.600px; text-anchor: middle; paint-order: stroke; stroke: #fff; stroke-width: 6px; stroke-linejoin: round; }
.labels { fill: #27313b; }
.labels text.sm, .labels .sm text { font-size: 34px; }
.labels text.md { font-size: 38px; }
.labels text.gray { font-size: 38px; font-weight: 400; fill: #6c6c72; }
.labels text.num { font-size: 36px; font-weight: 400; fill: #86693c; letter-spacing: 0; }
.road { font: 36px "Noto Sans CJK KR"; letter-spacing: -4px; text-anchor: middle; fill: #77705f; }
.road.hw { font-weight: 500; fill: #8c5312; }
.pin { font: 600 64px Inter; fill: #fff; text-anchor: middle; }
.pin.one { font-size: 44px; fill: #2f7ff0; }

.addr { margin-top: 37.500px; height: 32px; line-height: 32px; font-size: 21.500px; font-weight: 500; letter-spacing: -.9px; }
.contact { display: flex; height: 65px; margin-top: 22px; border: 1.500px solid #e0e0e0; border-radius: 14px; }
.contact div { flex: 1; display: flex; align-items: center; justify-content: center; gap: 8px; font-size: 17px; letter-spacing: -.8px; position: relative; }
.contact div + div::before { content: ""; position: absolute; left: 0; top: 20px; width: 1.500px; height: 22px; background: #cfcfcf; }
.contact dt { font-weight: 500; letter-spacing: -.7px; }
.contact dd { color: #6b6b6b; }
.route { border-top: 2px solid #4a4a4c; margin-top: 43.500px; height: 242px; padding-top: 23px; }
.route.second { margin-top: 0; border-color: #555; }
.route h2 { height: 40px; line-height: 40px; font-size: 26px; font-weight: 500; letter-spacing: -1.800px; margin: 0 0 11.500px -2px; }
.route p { display: flex; align-items: center; height: 31px; gap: 16.500px; margin-bottom: 12.700px; font-size: 17px; color: #6b6b6b; letter-spacing: -.83px; }
.tag { width: 61px; height: 31px; border-radius: 4px; color: #fff; font-size: 15px; font-weight: 700; line-height: 31px; text-align: center; letter-spacing: -.8px; }
.green { background: #41ab1a; }
.teal { background: #00acbd; }
.pink { background: #f0599c; }

.footer { display: flex; justify-content: space-between; height: 263px; padding: 0 380.500px; background: #2f2f2f; color: #a3a3a3; border-bottom: 1px solid #666; }
.f-logo { display: flex; align-items: center; height: 30px; margin-top: 49px; color: #fff; }
.f-mark { width: 34px; height: 21px; }
.f-name { display: flex; flex-direction: column; width: 79px; margin-left: 2.500px; }
.f-name b { font-size: 15.500px; line-height: 14px; font-weight: 700; letter-spacing: 1.500px; margin-top: -2px; }
.f-name i { font-size: 6.600px; line-height: 7px; font-weight: 700; letter-spacing: .1px; margin-top: 2px; }
.f-bar { width: 1.500px; height: 17px; background: #ddd; margin: 0 10px; }
.f-logo strong { font-size: 17px; font-weight: 700; letter-spacing: -1px; }
.f-addr { margin-top: 13px; height: 30px; line-height: 30px; font-size: 16px; letter-spacing: -.76px; }
.f-tel { display: flex; align-items: center; height: 30px; font-size: 16px; letter-spacing: -.8px; }
.f-tel i { width: 1px; height: 14px; background: #666; margin: 0 9px; }
.f-copy { margin-top: 20px; height: 30px; line-height: 30px; font-size: 15.300px; letter-spacing: -.8px; color: #747474; }
.f-right { display: flex; flex-direction: column; align-items: flex-end; }
.f-right nav { display: flex; gap: 25.500px; height: 30px; line-height: 30px; margin: 45px 2px 0 0; font-size: 16.300px; font-weight: 500; color: #fff; letter-spacing: -.95px; }
.family { display: flex; width: 219px; height: 44px; margin-top: 91px; border: 1.500px solid #6a6a6a; font-size: 15px; line-height: 41px; letter-spacing: -.9px; }
.family span { flex: 1; padding-left: 16px; }
.family button { width: 43px; border-left: 1.500px solid #6a6a6a; display: flex; align-items: center; justify-content: center; }
.family svg { width: 18px; height: 18px; }
```
